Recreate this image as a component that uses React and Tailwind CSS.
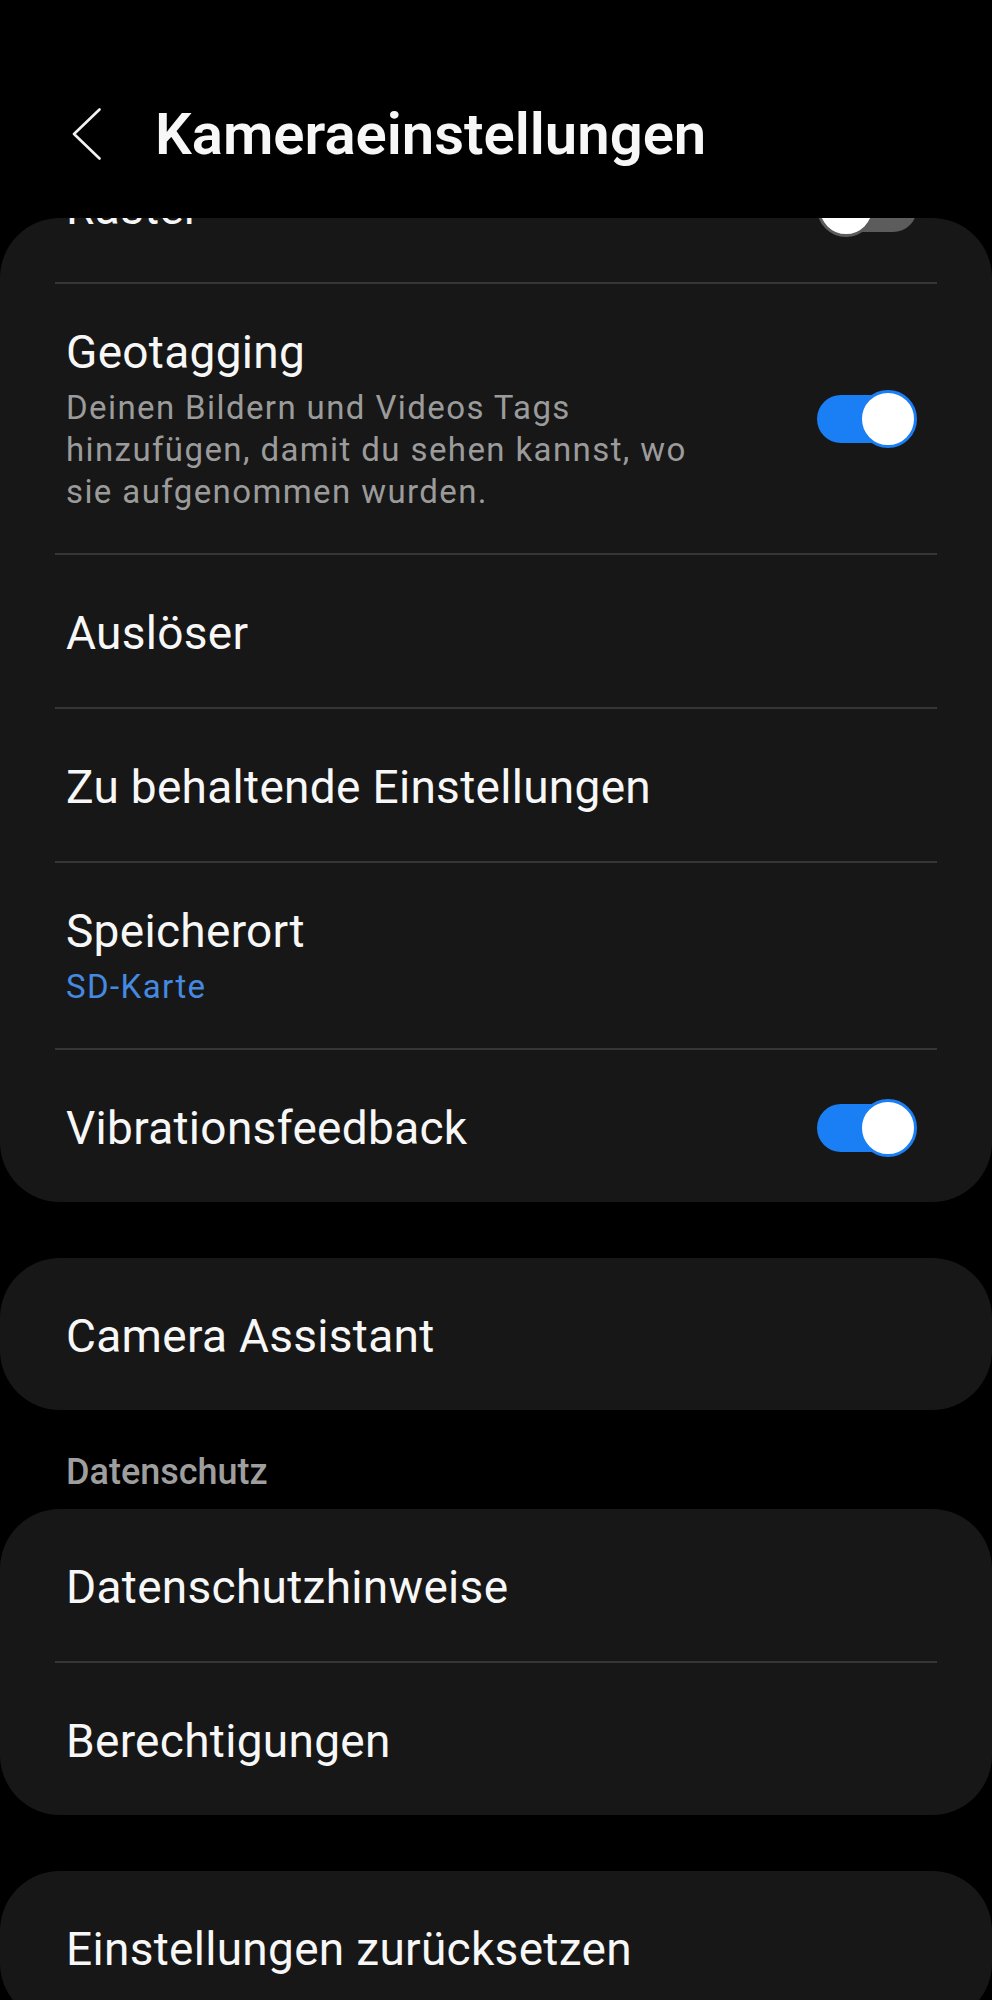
import React from 'react';

function Toggle({ on }) {
    if (on) {
        return (
            <div className="relative h-[58px] w-[100px] shrink-0">
                <div className="absolute left-0 top-[5px] h-[48px] w-[90px] rounded-full bg-[#1a7ff5]" />
                <div className="absolute right-0 top-0 h-[58px] w-[58px] rounded-full border-[3px] border-[#1a7ff5] bg-white" />
            </div>
        );
    }
    return (
        <div className="relative h-[58px] w-[100px] shrink-0">
            <div className="absolute right-0 top-[5px] h-[48px] w-[90px] rounded-full bg-[#5c5c5c]" />
            <div className="absolute left-0 top-0 h-[58px] w-[58px] rounded-full border-[3px] border-[#5c5c5c] bg-white" />
        </div>
    );
}

function Divider() {
    return <div className="mx-[55px] h-[2px] bg-[#363636]" />;
}

function Row({ title, toggle }) {
    return (
        <div className="flex h-[152px] items-center justify-between pl-[66px] pr-[75px] pt-[4px]">
            <span className="text-[46px] leading-[56px] tracking-[0.3px] text-[#f7f7f7]">{title}</span>
            {toggle !== undefined && <Toggle on={toggle} />}
        </div>
    );
}

export default function App() {
    return (
        <div className="h-[2000px] overflow-hidden bg-black font-['Roboto',sans-serif]">
            <header className="flex h-[218px] items-start pt-[100px]">
                <div className="flex h-[68px] items-center pl-[72px]">
                    <svg width="30" height="52" viewBox="0 0 30 52" fill="none">
                        <path d="M27.5 1.5 L2 26 L27.5 50.5" stroke="#f2f2f2" strokeWidth="2.6" strokeLinecap="round" strokeLinejoin="round" />
                    </svg>
                </div>
                <h1 className="ml-[53px] text-[58px] font-semibold leading-[68px] text-[#f7f7f7]">Kameraeinstellungen</h1>
            </header>

            <div className="h-[1782px] overflow-hidden rounded-t-[60px]">
                <div className="mt-[-88px]">
                    <div className="rounded-[60px] bg-[#171717]">
                        <Row title="Raster" toggle={false} />
                        <Divider />
                        <div className="flex items-center justify-between pl-[66px] pr-[75px] py-[40px]">
                            <div>
                                <div className="text-[46px] leading-[56px] tracking-[0.3px] text-[#f7f7f7]">Geotagging</div>
                                <div className="mt-[7px] text-[33px] leading-[42px] tracking-[1.4px] text-[#9b9b9b]">
                                    Deinen Bildern und Videos Tags<br />
                                    hinzufügen, damit du sehen kannst, wo<br />
                                    sie aufgenommen wurden.
                                </div>
                            </div>
                            <Toggle on />
                        </div>
                        <Divider />
                        <Row title="Auslöser" />
                        <Divider />
                        <Row title="Zu behaltende Einstellungen" />
                        <Divider />
                        <div className="pl-[66px] pr-[75px] py-[40px]">
                            <div className="text-[46px] leading-[56px] tracking-[0.3px] text-[#f7f7f7]">Speicherort</div>
                            <div className="mt-[7px] text-[33px] leading-[42px] tracking-[1.4px] text-[#4589e0]">SD-Karte</div>
                        </div>
                        <Divider />
                        <Row title="Vibrationsfeedback" toggle />
                    </div>

                    <div className="mt-[56px] rounded-[60px] bg-[#171717]">
                        <Row title="Camera Assistant" />
                    </div>

                    <div className="pl-[66px] pt-[40px] pb-[15px] text-[36px] font-medium leading-[44px] text-[#9e9e9e]">
                        Datenschutz
                    </div>

                    <div className="rounded-[60px] bg-[#171717]">
                        <Row title="Datenschutzhinweise" />
                        <Divider />
                        <Row title="Berechtigungen" />
                    </div>

                    <div className="mt-[56px] rounded-[60px] bg-[#171717]">
                        <Row title="Einstellungen zurücksetzen" />
                    </div>
                </div>
            </div>
        </div>
    );
}
